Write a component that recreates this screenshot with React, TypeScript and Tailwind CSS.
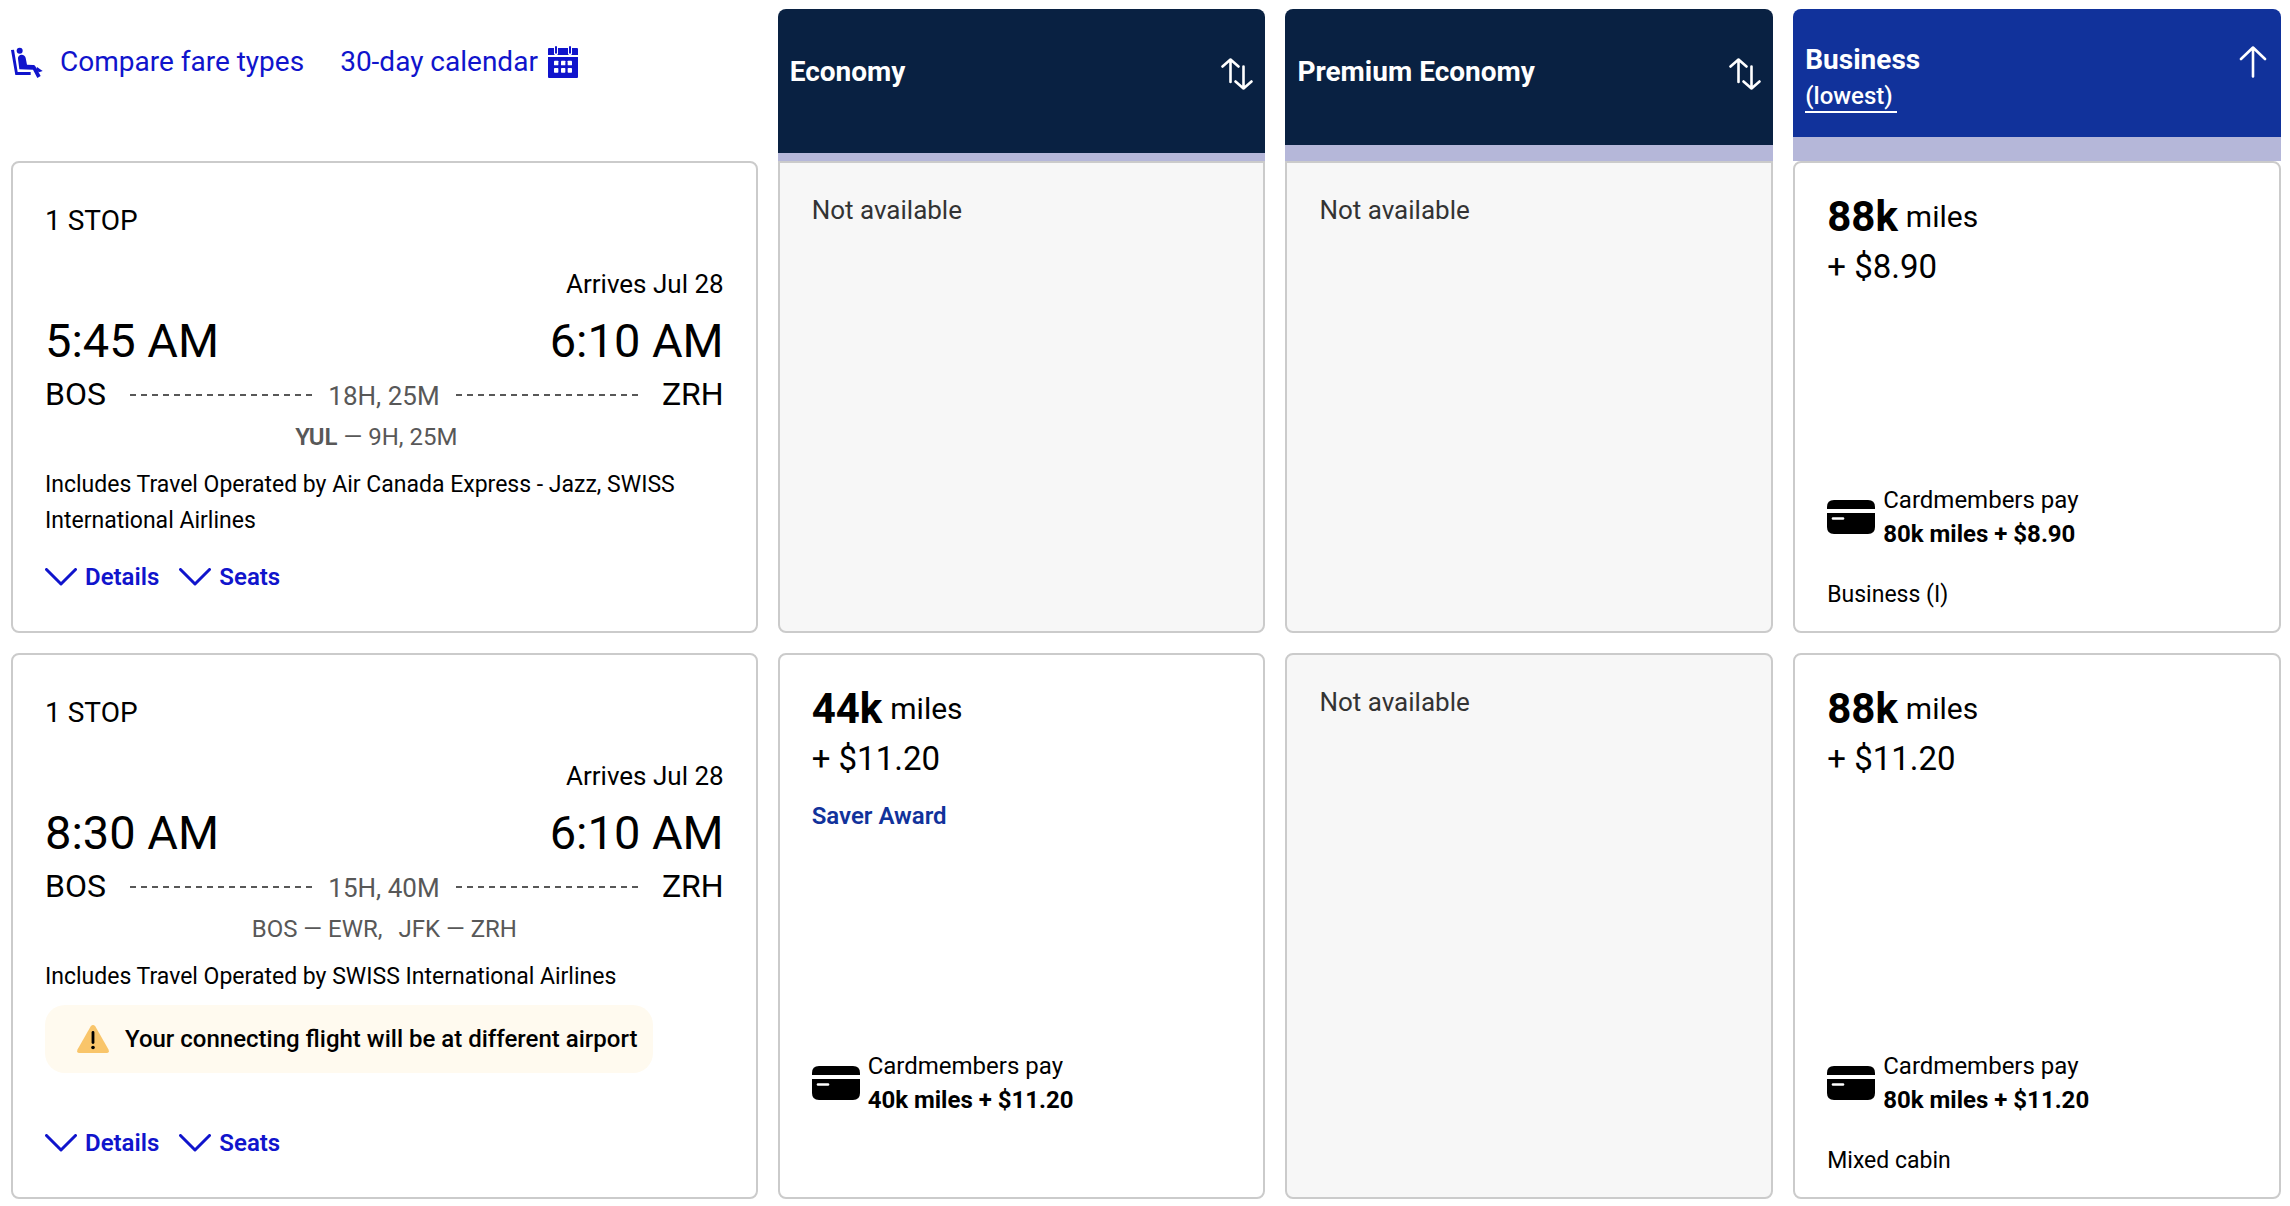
import React from "react";

type Fare = {
  miles: string;
  fee: string;
  saver?: boolean;
  cardMiles: string;
  cabin?: string;
};

type Flight = {
  id: string;
  depart: string;
  arrive: string;
  duration: string;
  route: React.ReactNode;
  operator: string;
  warning?: string;
  fares: (Fare | null)[];
};

const flights: Flight[] = [
  {
    id: "545",
    depart: "5:45 AM",
    arrive: "6:10 AM",
    duration: "18H, 25M",
    route: (
      <span className="pr-4">
        <b className="font-semibold">YUL</b> — 9H, 25M
      </span>
    ),
    operator:
      "Includes Travel Operated by Air Canada Express - Jazz, SWISS International Airlines",
    fares: [
      null,
      null,
      { miles: "88k", fee: "$8.90", cardMiles: "80k", cabin: "Business (I)" },
    ],
  },
  {
    id: "830",
    depart: "8:30 AM",
    arrive: "6:10 AM",
    duration: "15H, 40M",
    route: (
      <>
        <span>BOS — EWR,</span>
        <span>JFK — ZRH</span>
      </>
    ),
    operator: "Includes Travel Operated by SWISS International Airlines",
    warning: "Your connecting flight will be at different airport",
    fares: [
      { miles: "44k", fee: "$11.20", saver: true, cardMiles: "40k" },
      null,
      { miles: "88k", fee: "$11.20", cardMiles: "80k", cabin: "Mixed cabin" },
    ],
  },
];

function SeatIcon() {
  return (
    <svg viewBox="33 43 99 93" className="h-[31px] w-[33px] shrink-0" fill="currentColor" aria-hidden="true">
      <path d="M33 52l9-1 11 67h39v9H46z" />
      <circle cx="59" cy="54" r="9" />
      <path d="M54 78c-1-7 4-12 11-12 6 0 11 4 12 10l4 20 18 1c3 0 6 1 7 4l16 29-10 6-13-25-41-1z" />
      <path d="M111 103l17 12-11 4-9-8z" />
    </svg>
  );
}

function CalendarIcon() {
  return (
    <svg viewBox="48 42 90 96" className="h-8 w-[30px] shrink-0" aria-hidden="true">
      <path fill="currentColor" d="M48 51q0-3 3-3h84q3 0 3 3v18H48zM48 75h90v60q0 3-3 3H51q-3 0-3-3z" />
      {[72, 114].map((x) => (
        <g key={x} strokeLinecap="round">
          <path d={`M${x} 45v19`} stroke="#fff" strokeWidth="12" />
          <path d={`M${x} 45v17`} stroke="currentColor" strokeWidth="6" />
        </g>
      ))}
      {[86, 108].map((y) =>
        [66, 87, 107].map((x) => (
          <rect key={`${x}-${y}`} x={x} y={y} width="13" height="14" rx="2" fill="#fff" />
        ))
      )}
    </svg>
  );
}

function SortBothIcon() {
  return (
    <svg viewBox="0 0 32 32" className="size-8" fill="none" stroke="currentColor" strokeWidth="2.6" strokeLinecap="round" strokeLinejoin="round" aria-hidden="true">
      <path d="M1.5 8.5l8-7 8 7M9.5 1.5v22.5M14.5 23.5l8 7 8-7M22.5 30.5V8.5" />
    </svg>
  );
}

function SortUpIcon() {
  return (
    <svg viewBox="0 0 32 32" className="size-8" fill="none" stroke="currentColor" strokeWidth="2.6" strokeLinecap="round" strokeLinejoin="round" aria-hidden="true">
      <path d="M4 13L16 1.5 28 13M16 1.5v29" />
    </svg>
  );
}

function ChevronIcon() {
  return (
    <svg viewBox="0 0 32 18" className="h-[18px] w-8" fill="none" stroke="currentColor" strokeWidth="3" strokeLinecap="round" strokeLinejoin="round" aria-hidden="true">
      <path d="M1.5 1.5L16 16 30.5 1.5" />
    </svg>
  );
}

function CardIcon() {
  return (
    <svg viewBox="0 0 48 34" className="h-[34px] w-12 shrink-0" aria-hidden="true">
      <path d="M7 0h34q7 0 7 7v2H0V7q0-7 7-7zM0 13h48v14q0 7-7 7H7q-7 0-7-7z" />
      <path d="M6 18.5h10" stroke="#fff" strokeWidth="2.6" strokeLinecap="round" />
    </svg>
  );
}

function WarningIcon() {
  return (
    <svg viewBox="0 0 32 28" className="h-7 w-8 shrink-0" aria-hidden="true">
      <path fill="#f9c56a" d="M13.6 1.4q2.4-2.8 4.8 0l13.1 23.1q1.3 3.5-2.2 3.5H2.7q-3.5 0-2.2-3.5z" />
      <path d="M16 7.5v10" stroke="#000" strokeWidth="2.8" strokeLinecap="round" />
      <circle cx="16" cy="22.5" r="1.8" />
    </svg>
  );
}

function Dashes() {
  return (
    <span className="h-0.5 grow self-center bg-[repeating-linear-gradient(90deg,#585858_0_6px,transparent_6px_11px)]" />
  );
}

function Toggle({ label }: { label: string }) {
  return (
    <button type="button" aria-expanded="false" className="flex items-center gap-2">
      <ChevronIcon />
      {label}
    </button>
  );
}

function FlightCard({ flight }: { flight: Flight }) {
  return (
    <div className="flex grow flex-col rounded-lg border-2 border-[#cbcbcb] bg-white px-8 pt-9 pb-[38px]">
      <p className="text-[28px] leading-[44px]">1 STOP</p>
      <p className="mt-6 text-right text-[26px] leading-[34px]">Arrives Jul 28</p>
      <div className="mt-3 flex justify-between text-[47px] leading-[56px]">
        <span>{flight.depart}</span>
        <span>{flight.arrive}</span>
      </div>
      <div className="mt-1 flex items-baseline text-[32px] leading-[42px]">
        <span>BOS</span>
        <span className="mr-4 ml-6 flex grow self-center">
          <Dashes />
        </span>
        <span className="text-[26px] text-[#585858]">{flight.duration}</span>
        <span className="mr-6 ml-4 flex grow self-center">
          <Dashes />
        </span>
        <span>ZRH</span>
      </div>
      <div className="mt-1.5 flex justify-center gap-4 text-[24px] leading-[28px] text-[#585858]">
        {flight.route}
      </div>
      <p className="mt-4 text-[23px] leading-9">{flight.operator}</p>
      {flight.warning && (
        <div className="mt-2.5 mb-8 flex h-[68px] items-center gap-4 self-start rounded-[20px] bg-[#fffaef] pr-4 pl-8 text-[24px] font-medium">
          <WarningIcon />
          {flight.warning}
        </div>
      )}
      <div className="mt-[22px] flex gap-5 text-[24px] leading-8 font-semibold text-[#1014cc]">
        <Toggle label="Details" />
        <Toggle label="Seats" />
      </div>
    </div>
  );
}

function FareCard({ fare, first }: { fare: Fare | null; first: boolean }) {
  if (!fare) {
    return (
      <div
        className={`grow border-2 border-[#cbcbcb] bg-[#f7f7f7] px-8 pt-8 text-[26px] leading-[30px] text-[#333] ${
          first ? "rounded-b-lg" : "rounded-lg"
        }`}
      >
        Not available
      </div>
    );
  }
  return (
    <div className="flex grow flex-col rounded-lg border-2 border-[#cbcbcb] bg-white px-8 pt-8 pb-5">
      <p className="flex items-center gap-2 leading-[44px]">
        <span className="text-[42px] font-bold">{fare.miles}</span>
        <span className="text-[30px]">miles</span>
      </p>
      <p className="mt-2 text-[33px] leading-[40px]">+ {fare.fee}</p>
      {fare.saver && (
        <p className="mt-5 text-[24px] leading-[34px] font-semibold text-[#11329b]">Saver Award</p>
      )}
      <div className="mt-auto flex items-center gap-2 text-[24px] leading-[34px]">
        <CardIcon />
        <div>
          <p>Cardmembers pay</p>
          <p className="font-bold">
            {fare.cardMiles} miles + {fare.fee}
          </p>
        </div>
      </div>
      <p className="mt-7 h-8 text-[23px] leading-8">{fare.cabin}</p>
    </div>
  );
}

export default function App() {
  return (
    <main className="bg-white pt-[9px] pr-[9px] pb-1.5 pl-[11px] font-['Roboto','Inter',sans-serif] text-black">
      <table className="grid grid-cols-[747fr_488fr_488fr_488fr] gap-x-5 text-left">
        <thead className="contents">
          <tr className="contents">
            <td className="flex items-start pt-[33px] text-[28px] leading-10 text-[#1014cc]">
              <a href="#compare" className="flex items-center gap-4">
                <SeatIcon />
                Compare fare types
              </a>
              <a href="#calendar" className="ml-9 flex items-center gap-2.5">
                30-day calendar
                <CalendarIcon />
              </a>
            </td>
            <th
              scope="col"
              className="flex h-[152px] items-start justify-between rounded-t-lg border-b-8 border-[#b5b7d9] bg-[#092142] px-3 pt-11 text-[28px] leading-[38px] font-bold text-white"
            >
              Economy
              <button type="button" aria-label="Sort by Economy" className="mt-[5px]">
                <SortBothIcon />
              </button>
            </th>
            <th
              scope="col"
              className="flex h-[152px] items-start justify-between rounded-t-lg border-b-16 border-[#b5b7d9] bg-[#092142] px-3 pt-11 text-[28px] leading-[38px] font-bold text-white"
            >
              Premium Economy
              <button type="button" aria-label="Sort by Premium Economy" className="mt-[5px]">
                <SortBothIcon />
              </button>
            </th>
            <th
              scope="col"
              className="flex h-[152px] items-start justify-between rounded-t-lg border-b-24 border-[#b5b7d9] bg-[#11329b] px-3 pt-8 text-[28px] leading-[38px] font-bold text-white"
            >
              <div>
                <div>Business</div>
                <a
                  href="#lowest"
                  className="block w-fit border-b-2 border-white pt-0.5 pr-1 text-[24px] leading-[30px] font-medium"
                >
                  (lowest)
                </a>
              </div>
              <button type="button" aria-label="Sort by Business" className="mt-[5px]">
                <SortUpIcon />
              </button>
            </th>
          </tr>
        </thead>
        <tbody className="contents">
          {flights.map((flight, row) => (
            <tr key={flight.id} className="contents">
              <td className={row === 0 ? "flex" : "flex pt-5"}>
                <FlightCard flight={flight} />
              </td>
              {flight.fares.map((fare, i) => (
                <td key={i} className={row === 0 ? "flex" : "flex pt-5"}>
                  <FareCard fare={fare} first={row === 0} />
                </td>
              ))}
            </tr>
          ))}
        </tbody>
      </table>
    </main>
  );
}
